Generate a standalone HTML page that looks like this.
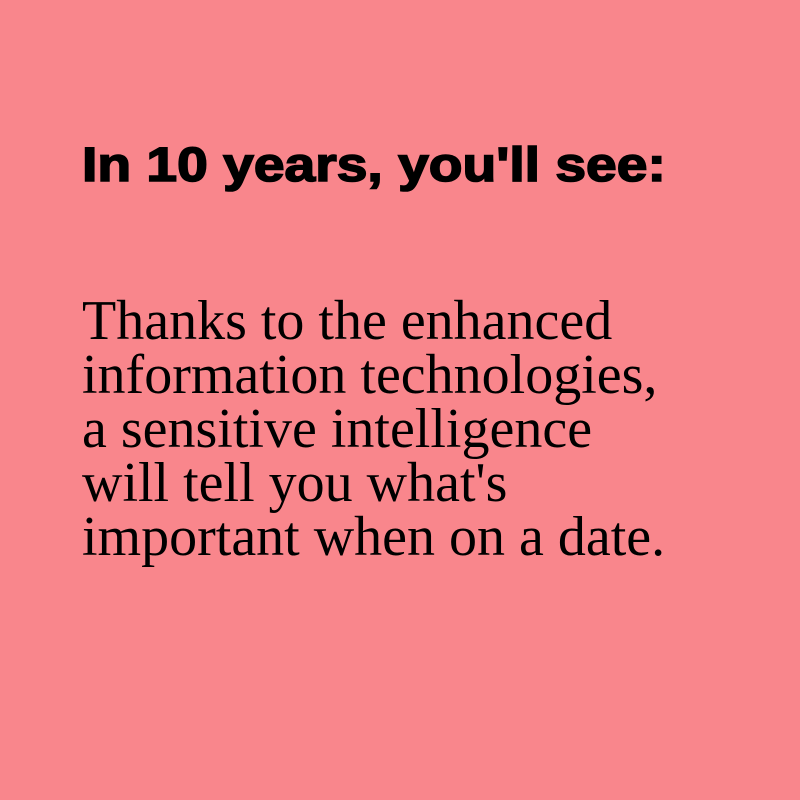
<!DOCTYPE html>
<html><head><style>
html,body{margin:0;padding:0;}
body{width:800px;height:800px;background:#f9868c;position:relative;overflow:hidden;}
h1{position:absolute;left:82px;top:142px;margin:0;font:bold 48px/48px "Liberation Sans",sans-serif;color:#000;-webkit-text-stroke:1.6px #000;white-space:nowrap;transform:scaleX(1.15);transform-origin:0 0;}
p{position:absolute;left:82px;top:294px;margin:0;font:56px/54px "Liberation Serif",serif;color:#000;white-space:nowrap;}
</style></head><body>
<h1>In 10 years, you'll see:</h1>
<p>Thanks to the enhanced<br>information technologies,<br>a sensitive intelligence<br>will tell you what's<br>important when on a date.</p>
</body></html>
